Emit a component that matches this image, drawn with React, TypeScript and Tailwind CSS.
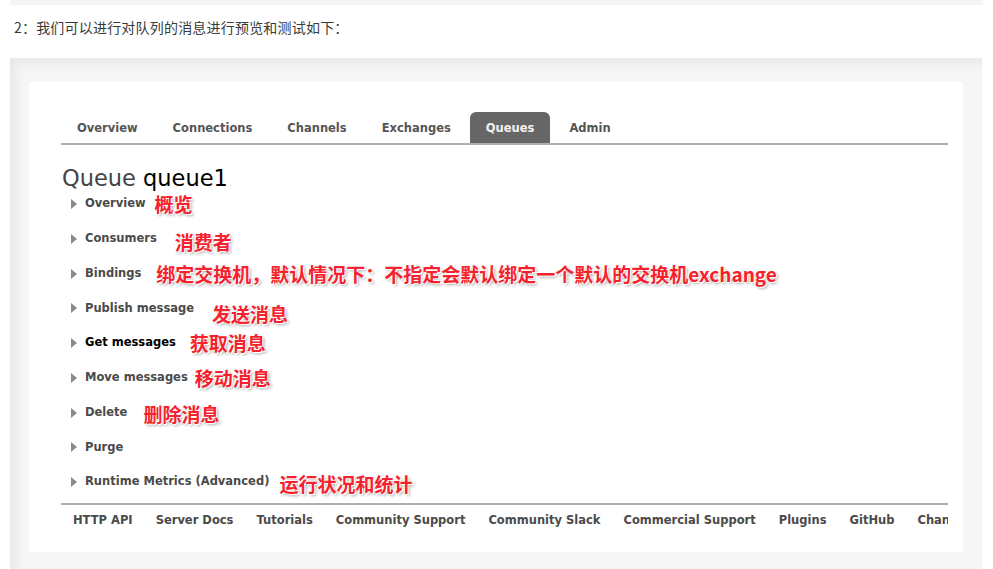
const tabs = ["Overview", "Connections", "Channels", "Exchanges", "Queues", "Admin"];

interface Section {
  label: string;
  note?: string;
  gap: string;
  shift?: string;
  dark?: boolean;
}

const sections: Section[] = [
  { label: "Overview", note: "概览", gap: "ml-[9px]" },
  { label: "Consumers", note: "消费者", gap: "ml-[18px]", shift: "translate-y-[3px]" },
  { label: "Bindings", note: "绑定交换机，默认情况下：不指定会默认绑定一个默认的交换机exchange", gap: "ml-[15px]" },
  { label: "Publish message", note: "发送消息", gap: "ml-[18px]", shift: "translate-y-[6px]" },
  { label: "Get messages", note: "获取消息", gap: "ml-[14px]", dark: true },
  { label: "Move messages", note: "移动消息", gap: "ml-[7px]" },
  { label: "Delete", note: "删除消息", gap: "ml-[16px]", shift: "translate-y-[1px]" },
  { label: "Purge", gap: "" },
  { label: "Runtime Metrics (Advanced)", note: "运行状况和统计", gap: "ml-[10px]", shift: "translate-y-[2px]" },
];

const footerLinks = [
  "HTTP API",
  "Server Docs",
  "Tutorials",
  "Community Support",
  "Community Slack",
  "Commercial Support",
  "Plugins",
  "GitHub",
  "Changelog",
];

function Arrow() {
  return (
    <svg width="6" height="10" viewBox="0 0 6 10" className="shrink-0">
      <path d="M0 0 L6 5 L0 10 Z" fill="#8a8a8a" />
    </svg>
  );
}

export default function App() {
  return (
    <div className="w-[993px] h-[569px] overflow-hidden bg-white font-['Noto_Sans_CJK_SC',sans-serif]">
      <div className="mx-[10px] h-[5px] bg-[#f5f5f5]" />
      <p className="mt-[12px] pl-[14px] text-[14px] tracking-[0.2px] leading-[20px] text-[#3a3a3a]">
        2：我们可以进行对队列的消息进行预览和测试如下：
      </p>

      {/* screenshot frame */}
      <div className="mt-[21px] ml-[10px] w-[972px] h-[520px] bg-[#f6f6f6] pl-[19px] pt-[24px] pr-[19px] shadow-[inset_5px_5px_12px_rgba(0,0,0,0.06)]">
        <div className="bg-white pt-[30px] pl-[32px] pr-[15px] pb-[17px] font-['DejaVu_Sans',Verdana,sans-serif]">
          {/* Tabs */}
          <div className="flex gap-[3px] h-[31px] items-stretch">
            {tabs.map((tab) => (
              <div
                key={tab}
                className={`px-[16px] pt-[2px] flex items-center text-[11.5px] font-bold ${
                  tab === "Queues"
                    ? "bg-[#666666] text-[#f2f2f2] rounded-t-[6px]"
                    : "text-[#555555]"
                }`}
              >
                {tab}
              </div>
            ))}
          </div>
          <div className="h-[2px] bg-[#b0b0b0]" />

          {/* Heading */}
          <h1 className="mt-[21px] pl-[1px] text-[22.5px] leading-[24px] font-normal text-[#444444]">
            Queue <span className="text-black">queue1</span>
          </h1>

          {/* Sections */}
          <div className="mt-[2px] flex flex-col gap-[10.75px] pl-[10px]">
            {sections.map((s) => (
              <div key={s.label} className="flex items-center h-[24px]">
                <Arrow />
                <span
                  className={`ml-[8px] text-[11.5px] font-bold whitespace-nowrap ${
                    s.dark ? "text-black" : "text-[#4a4a4a]"
                  }`}
                >
                  {s.label}
                </span>
                {s.note && (
                  <span
                    className={`${s.gap} ${s.shift ?? ""} whitespace-nowrap text-[19px] leading-[24px] font-bold text-[#f5222d] font-['Noto_Sans_CJK_SC',sans-serif] [text-shadow:1px_1px_0_#fff,-1px_-1px_0_#fff,2px_2px_3px_rgba(0,0,0,0.35)]`}
                  >
                    {s.note}
                  </span>
                )}
              </div>
            ))}
          </div>

          {/* Footer */}
          <div className="mt-[9px] h-[2px] bg-[#b0b0b0]" />
          <div className="flex items-center h-[30px] pt-[2px] pl-[12px] gap-[23px] overflow-hidden">
            {footerLinks.map((link) => (
              <span key={link} className="text-[11.5px] font-bold text-[#4a4a4a] whitespace-nowrap">
                {link}
              </span>
            ))}
          </div>
        </div>
      </div>
    </div>
  );
}
